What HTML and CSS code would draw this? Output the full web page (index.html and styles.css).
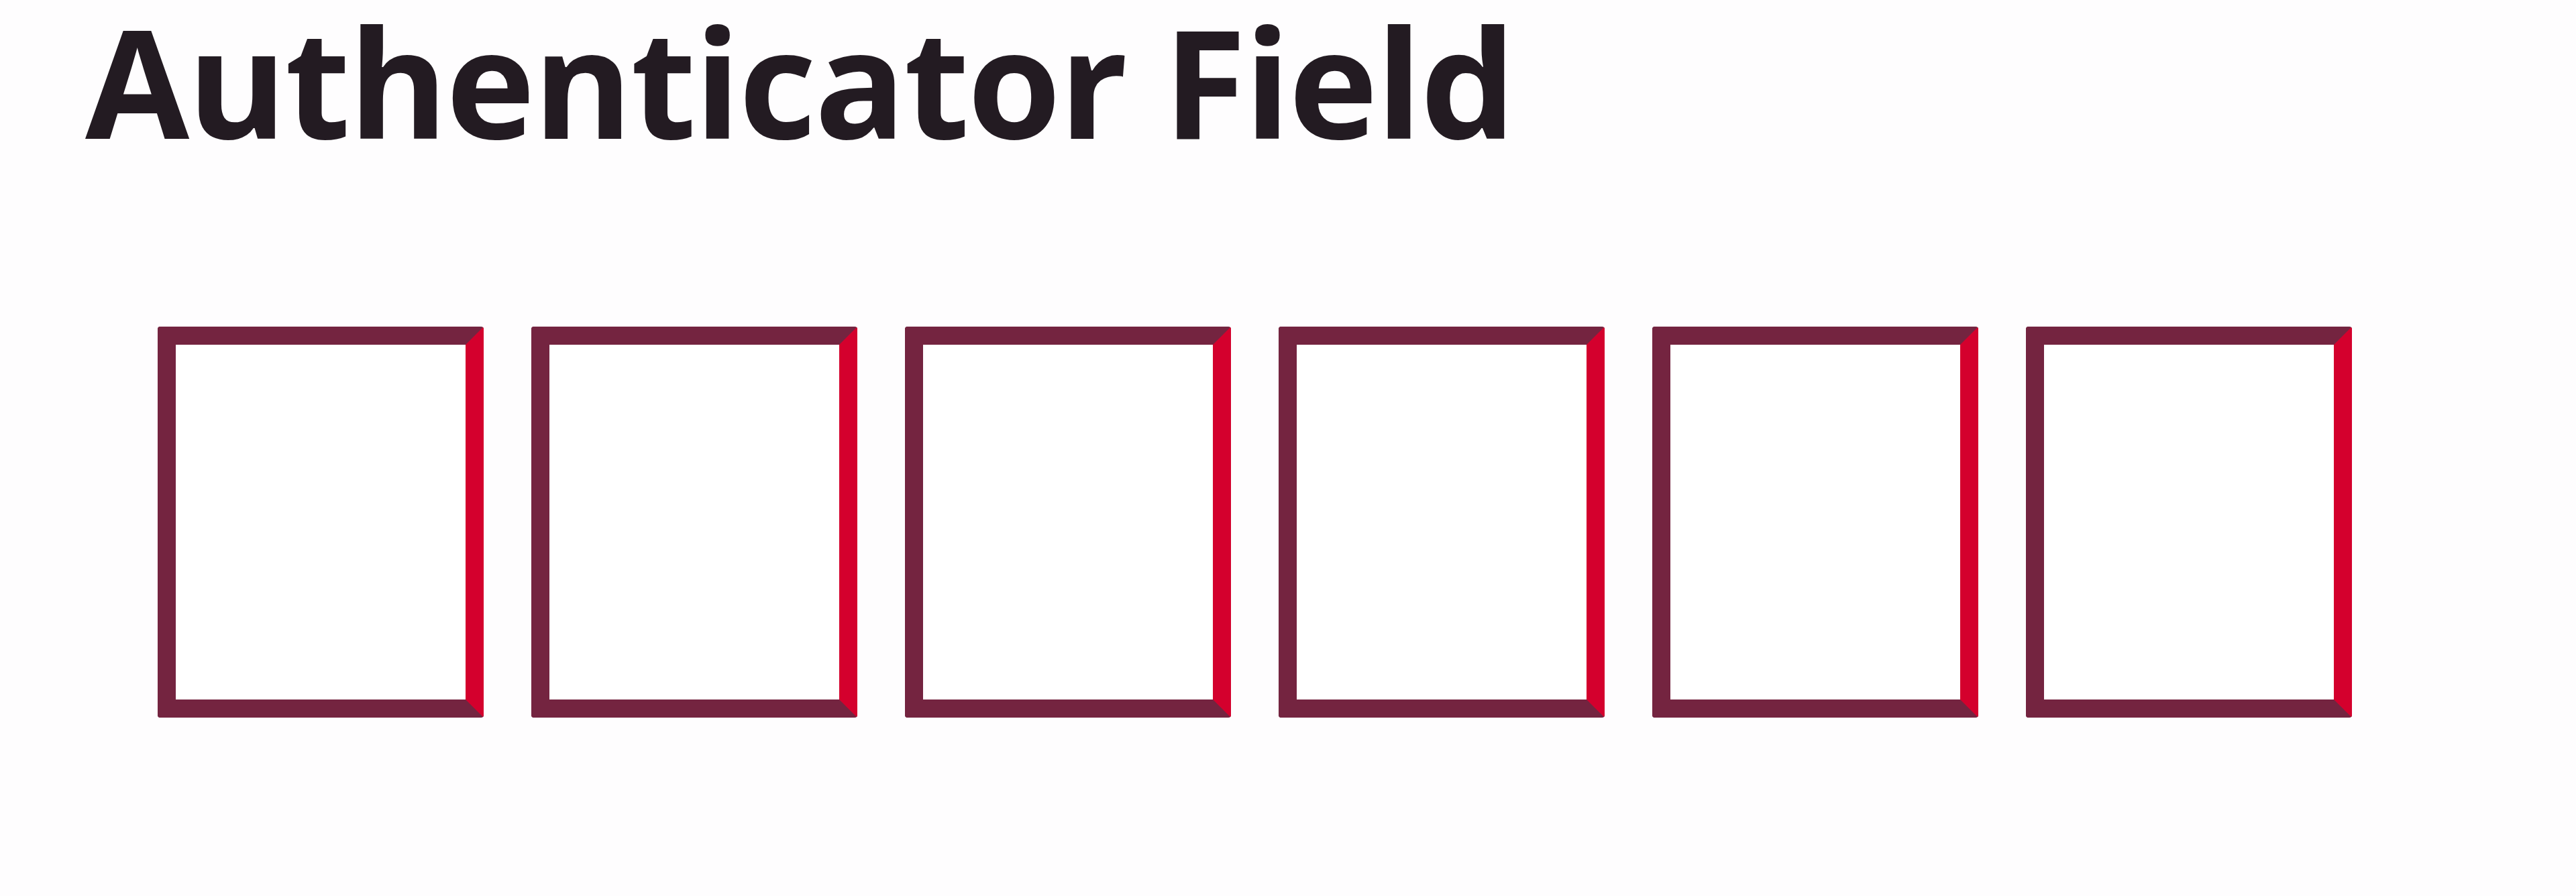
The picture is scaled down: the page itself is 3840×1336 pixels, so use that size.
FILE: index.html
```html
<!DOCTYPE html>
<html lang="en">
<head>
<meta charset="utf-8">
<title>Authenticator Field</title>
<link rel="stylesheet" href="styles.css">
</head>
<body>
<main class="page">
  <h1 class="title">Authenticator Field</h1>
  <div class="code-row">
    <input class="digit" type="text" maxlength="1" aria-label="Digit 1">
    <input class="digit" type="text" maxlength="1" aria-label="Digit 2">
    <input class="digit" type="text" maxlength="1" aria-label="Digit 3">
    <input class="digit" type="text" maxlength="1" aria-label="Digit 4">
    <input class="digit" type="text" maxlength="1" aria-label="Digit 5">
    <input class="digit" type="text" maxlength="1" aria-label="Digit 6">
  </div>
</main>
</body>
</html>
```

FILE: styles.css
```css
html, body {
  margin: 0;
  padding: 0;
  background: #fefdfe;
}

.page {
  padding: 0 0 0 127px;
  font-family: "Open Sans", "Liberation Sans", sans-serif;
}

.title {
  margin: 0;
  padding-top: 8px;
  font-size: 225px;
  line-height: 225px;
  font-weight: 700;
  color: #231b22;
  letter-spacing: -2.7px;
}

.code-row {
  display: flex;
  gap: 71px;
  margin-top: 254px;
  padding-left: 108px;
}

.digit {
  box-sizing: border-box;
  width: 486px;
  height: 583px;
  margin: 0;
  padding: 0;
  border: 27px solid #742440;
  border-right-color: #d4002d;
  border-radius: 4px;
  background: #ffffff;
  outline: none;
  font-family: inherit;
  font-size: 300px;
  text-align: center;
}
```
